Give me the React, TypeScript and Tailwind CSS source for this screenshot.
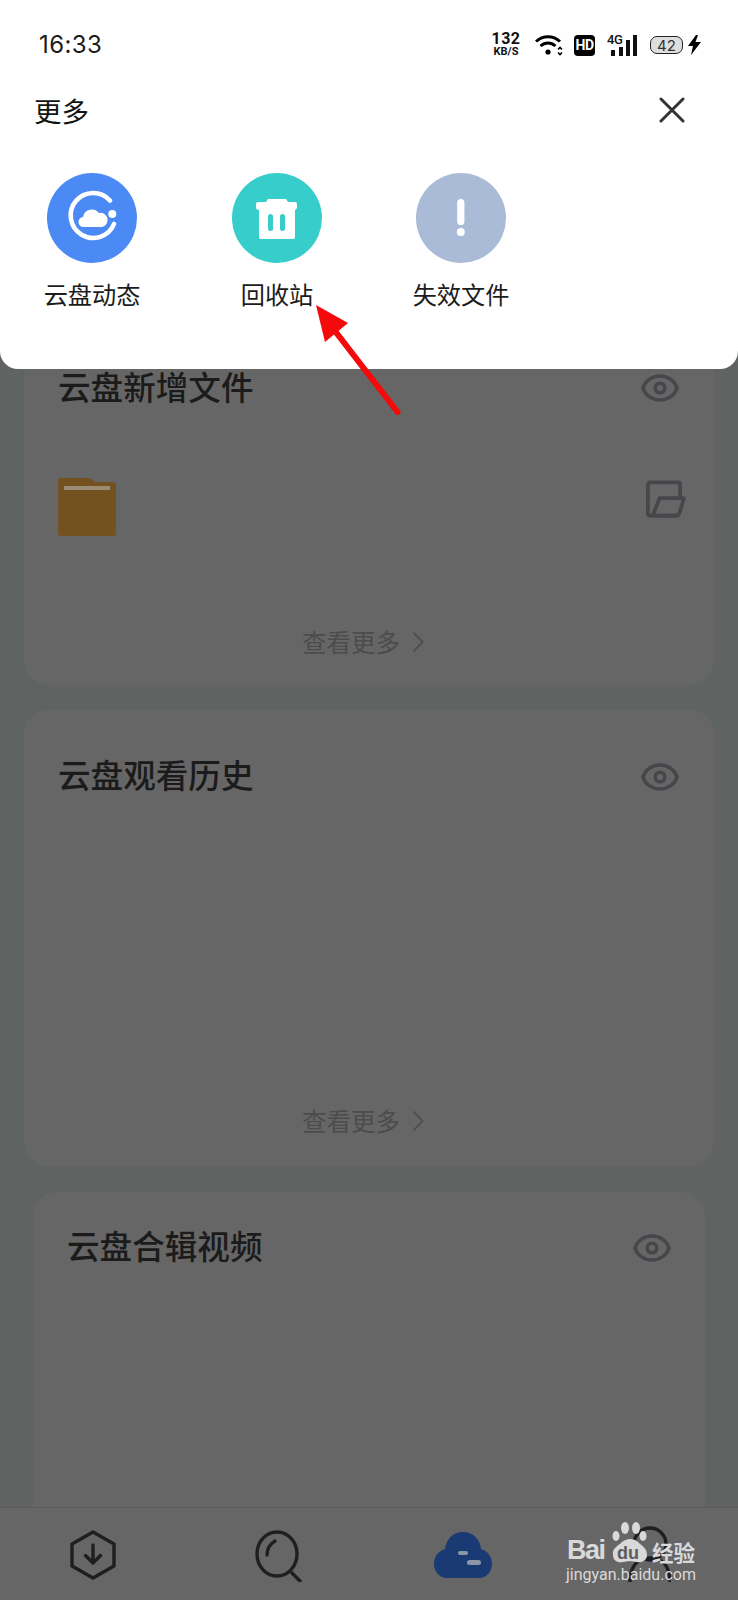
import React from "react";

const cjk = "font-['Noto_Sans_CJK_SC','Noto_Sans',sans-serif]";

function Eye({ className = "" }: { className?: string }) {
  return (
    <svg className={className} width="38" height="28" viewBox="0 0 38 28" fill="none" stroke="#45474b" strokeWidth="3.6">
      <path d="M2 14C4 7 11 2 19 2s15 5 17 12c-2 7-9 12-17 12S4 21 2 14Z" />
      <circle cx="19" cy="14" r="4.8" />
    </svg>
  );
}

function More({ className = "" }: { className?: string }) {
  return (
    <div className={`flex items-center justify-center gap-[12px] ${className}`}>
      <span className="text-[24.5px] leading-[32px] text-[#4c4c4c]">查看更多</span>
      <svg width="12" height="22" viewBox="0 0 12 22" fill="none" stroke="#4c4c4c" strokeWidth="1.8">
        <path d="M1.5 1.5 10.5 11 1.5 20.5" />
      </svg>
    </div>
  );
}

function Folder() {
  return (
    <svg width="58" height="58" viewBox="0 0 58 58">
      <path d="M3 0h29l5 4h18a3 3 0 0 1 3 3v48a3 3 0 0 1-3 3H3a3 3 0 0 1-3-3V3a3 3 0 0 1 3-3Z" fill="#735220" />
      <rect x="6" y="8" width="46" height="4" fill="#9a8d76" />
    </svg>
  );
}

function OpenFolder() {
  return (
    <svg width="40" height="38" viewBox="0 0 41 38" fill="none" stroke="#45474b" strokeWidth="3.8" strokeLinejoin="round">
      <path d="M35 17V4a2 2 0 0 0-2-2H4a2 2 0 0 0-2 2v30a2 2 0 0 0 2 2h27" />
      <path d="M7 36 14 18h25l-5 16a3 3 0 0 1-3 2H7Z" />
    </svg>
  );
}

function StatusBar() {
  return (
    <div className="flex h-[90px] items-start justify-between pl-[39px] pr-[36px] pt-[29px]">
      <span className="font-['Inter',sans-serif] text-[24px] leading-[32px] tracking-[0.4px] text-[#1c1c1c]">16:33</span>
      <div className="flex items-center pt-[3px]">
        <div className="flex w-[28px] flex-col items-center font-['Roboto',sans-serif] font-bold text-[#111]">
          <span className="text-[16px] leading-[14px] tracking-[0.5px]">132</span>
          <span className="text-[11px] leading-[12px]">KB/S</span>
        </div>
        <svg className="ml-[15px]" width="29" height="22" viewBox="0 0 29 22" fill="none" stroke="#000">
          <path d="M1 7.5C8 1 18 1 25 7.5" strokeWidth="3" />
          <path d="M5.5 12C10 8 16 8 20.5 12" strokeWidth="3" />
          <circle cx="13" cy="18" r="2.6" fill="#000" stroke="none" />
          <path d="M23 15.5l2-2 2 2M23 18.5l2 2 2-2" strokeWidth="1.6" />
        </svg>
        <div className="ml-[10px] flex h-[21px] w-[21px] items-center justify-center rounded-[4px] bg-black font-['Roboto',sans-serif] text-[14px] font-bold leading-none tracking-[-0.5px] text-white">
          HD
        </div>
        <div className="relative ml-[12px] h-[22px] w-[30px]">
          <span className="absolute left-0 top-[-1px] font-['Roboto',sans-serif] text-[13px] font-medium leading-[13px] tracking-[-0.5px] text-[#111]">4G</span>
          <svg className="absolute left-0 top-0" width="30" height="22" viewBox="0 0 30 22" fill="#111">
            <rect x="4" y="16" width="4" height="6" />
            <rect x="12" y="13" width="4" height="9" />
            <rect x="19" y="6" width="4" height="16" />
            <rect x="26" y="1" width="4" height="21" />
          </svg>
        </div>
        <div className="relative ml-[13px] flex h-[18px] w-[33px] items-center justify-center rounded-[7px] border-[1.5px] border-[#222] bg-[#dedede] font-['Inter',sans-serif] text-[15px] leading-none text-[#333]">
          42
        </div>
        <svg className="ml-[5px]" width="14" height="20" viewBox="0 0 14 20" fill="#000">
          <path d="M8 0 0 11h5l-2 9 10-13H7.5L10 0Z" />
        </svg>
      </div>
    </div>
  );
}

function Sheet() {
  const items = [
    {
      label: "云盘动态",
      bg: "bg-[#4b89f5]",
      w: "w-[185px]",
      icon: (
        <svg width="90" height="90" viewBox="0 0 90 90" fill="none">
          <path d="M63 27.5A22.5 22.5 0 1 0 67 51" stroke="#fff" strokeWidth="4.6" strokeLinecap="round" />
          <circle cx="65.3" cy="41" r="4" fill="#fff" />
          <path d="M37 54a5 5 0 0 1-1-10 9 9 0 0 1 16-4 7 7 0 0 1 3 14H37Z" fill="#fff" />
        </svg>
      ),
    },
    {
      label: "回收站",
      bg: "bg-[#37cdcb]",
      w: "w-[184px]",
      icon: (
        <svg width="90" height="90" viewBox="0 0 90 90">
          <path d="M36 26h18l2 3h7a2 2 0 0 1 2 2v3a3 3 0 0 1-3 3H27a3 3 0 0 1-3-3v-3a2 2 0 0 1 2-2h8Z" fill="#fff" />
          <path d="M27 37h36v27a2 2 0 0 1-2 2H29a2 2 0 0 1-2-2V37Z" fill="#fff" />
          <rect x="36" y="41" width="5" height="17" rx="2.5" fill="#37cdcb" />
          <rect x="48" y="41" width="5" height="17" rx="2.5" fill="#37cdcb" />
        </svg>
      ),
    },
    {
      label: "失效文件",
      bg: "bg-[#a9bbd6]",
      w: "w-[96px]",
      icon: (
        <svg width="10" height="38" viewBox="0 0 10 38" fill="#fff">
          <rect x="1.2" y="0" width="7.2" height="26" rx="3.6" />
          <circle cx="4.8" cy="33" r="4" />
        </svg>
      ),
    },
  ];
  return (
    <div className={`absolute inset-x-0 top-0 h-[369px] rounded-b-[18px] bg-white ${cjk}`}>
      <StatusBar />
      <div className="flex items-center justify-between pl-[34px] pr-[53px]">
        <span className="text-[27.5px] leading-[40px] text-[#141414]">更多</span>
        <svg width="26" height="26" viewBox="0 0 26 26" stroke="#333" strokeWidth="3" strokeLinecap="round">
          <path d="M2 2 24 24M24 2 2 24" />
        </svg>
      </div>
      <div className="mt-[43px] flex pl-[44px]">
        {items.map((it) => (
          <div key={it.label} className={`flex ${it.w} flex-col items-start`}>
            <div className="flex w-[96px] flex-col items-center">
              <div className={`flex h-[90px] w-[90px] items-center justify-center rounded-full ${it.bg}`}>{it.icon}</div>
              <span className="mt-[15px] whitespace-nowrap text-[24.2px] leading-[32px] text-[#1c1c1c]">{it.label}</span>
            </div>
          </div>
        ))}
      </div>
    </div>
  );
}

function BottomNav() {
  return (
    <div className="absolute inset-x-0 bottom-0 flex h-[93px] items-start border-t border-[#5c5c5c] bg-[#666666] pl-[70px] pt-[22px]">
      <svg width="46" height="50" viewBox="0 0 46 50" fill="none" stroke="#1f1f1f" strokeWidth="3.4" strokeLinejoin="round" strokeLinecap="round">
        <path d="M23 2 44 14v22L23 48 2 36V14Z" />
        <path d="M23 15v18M15.5 25.5l7.5 7.5 7.5-7.5" />
      </svg>
      <svg className="ml-[139px]" width="48" height="52" viewBox="0 0 48 52" fill="none" stroke="#1f1f1f" strokeWidth="3.4" strokeLinecap="round">
        <ellipse cx="22" cy="24" rx="20" ry="22" />
        <path d="M12 25c0-6 3-11 8-14" />
        <path d="M37 43l8 8" />
      </svg>
      <svg className="ml-[131px] mt-[2px]" width="58" height="46" viewBox="0 0 58 46">
        <path d="M29 0c11 0 17 8 18 17 7 2 11 8 11 15 0 8-6 14-13 14H13C6 46 0 40 0 32c0-7 4-13 11-15C12 8 18 0 29 0Z" fill="#193a73" />
        <rect x="24" y="19" width="10" height="4" rx="2" fill="#8c96a8" />
        <rect x="33" y="28" width="14" height="5" rx="2.5" fill="#8c96a8" />
      </svg>
      <svg className="ml-[133px] mt-[-4px]" width="46" height="58" viewBox="0 0 46 58" fill="none" stroke="#1f1f1f" strokeWidth="3.4">
        <circle cx="25" cy="18" r="16" />
        <path d="M5 56c0-14 6-24 20-24s20 10 20 24" />
      </svg>
    </div>
  );
}

function Watermark() {
  return (
    <div className="pointer-events-none absolute left-[565px] top-[1536px] h-[64px] w-[140px] text-[#d9d9d9]">
      <svg className="absolute left-[47px] top-[-14px]" width="36" height="42" viewBox="0 0 36 42" fill="#d9d9d9">
        <ellipse cx="4" cy="14" rx="3.5" ry="5" />
        <ellipse cx="13" cy="6" rx="4" ry="6" />
        <ellipse cx="24" cy="6" rx="4" ry="6" />
        <ellipse cx="31" cy="14" rx="3.5" ry="5" />
        <path d="M1 33c-1-7 5-9 9-13 5-4 12-4 16 0s9 6 9 13c0 6-6 8-10 7-4-1-10-1-14 0-5 1-10-1-10-7Z" />
      </svg>
      <span className="absolute left-[2px] top-[-4px] font-['Liberation_Sans',sans-serif] text-[27px] font-bold leading-[36px] tracking-[-1.5px]">Bai</span>
      <span className="absolute left-[52px] top-[5px] font-['Liberation_Sans',sans-serif] text-[18px] font-bold leading-[24px] text-[#5c5c5c]">du</span>
      <span className={`absolute left-[87px] top-[1px] text-[21.5px] font-bold leading-[30px] ${cjk}`}>经验</span>
      <span className="absolute left-[1px] top-[28px] whitespace-nowrap font-['Roboto',sans-serif] text-[16px] leading-[22px]">jingyan.baidu.com</span>
    </div>
  );
}

function Arrow() {
  return (
    <svg className="pointer-events-none absolute left-[310px] top-[300px]" width="100" height="120" viewBox="0 0 100 120">
      <path d="M25 31 87.5 112" stroke="#f40a0a" strokeWidth="6" strokeLinecap="round" fill="none" />
      <path d="M6 5 38 23 15 42Z" fill="#f40a0a" />
    </svg>
  );
}

export default function App() {
  return (
    <div className={`relative h-[1600px] w-[738px] overflow-hidden bg-[#5f6362] ${cjk}`}>
      <div className="flex flex-col items-center pt-[321px]">
        <section className="relative flex h-[364px] w-[690px] flex-col rounded-[24px] bg-[#666666] px-[34px] pt-[42px]">
          <div className="flex items-center justify-between">
            <h2 className="mb-[4px] text-[32.6px] font-medium leading-[46px] text-[#1b1b1b]">云盘新增文件</h2>
            <Eye className="mr-[1px]" />
          </div>
          <div className="mt-[65px] flex items-start justify-between">
            <Folder />
            <div className="mr-[-6px] mt-[2px]"><OpenFolder /></div>
          </div>
          <More className="mt-[90px] pr-[12px]" />
        </section>
        <section className="mt-[25px] flex h-[456px] w-[690px] flex-col rounded-[24px] bg-[#666666] px-[34px] pt-[41px]">
          <div className="flex items-center justify-between">
            <h2 className="mb-[6px] text-[32.6px] font-medium leading-[46px] text-[#1b1b1b]">云盘观看历史</h2>
            <Eye className="mr-[1px]" />
          </div>
          <More className="mt-[302px] pr-[12px]" />
        </section>
        <section className="mt-[26px] h-[420px] w-[672px] rounded-[24px] bg-[#666666] px-[34px] pt-[30px]">
          <div className="flex items-center justify-between">
            <h2 className="mb-[6px] text-[32.6px] font-medium leading-[46px] text-[#1b1b1b]">云盘合辑视频</h2>
            <Eye />
          </div>
        </section>
      </div>
      <BottomNav />
      <Sheet />
      <Arrow />
      <Watermark />
    </div>
  );
}
